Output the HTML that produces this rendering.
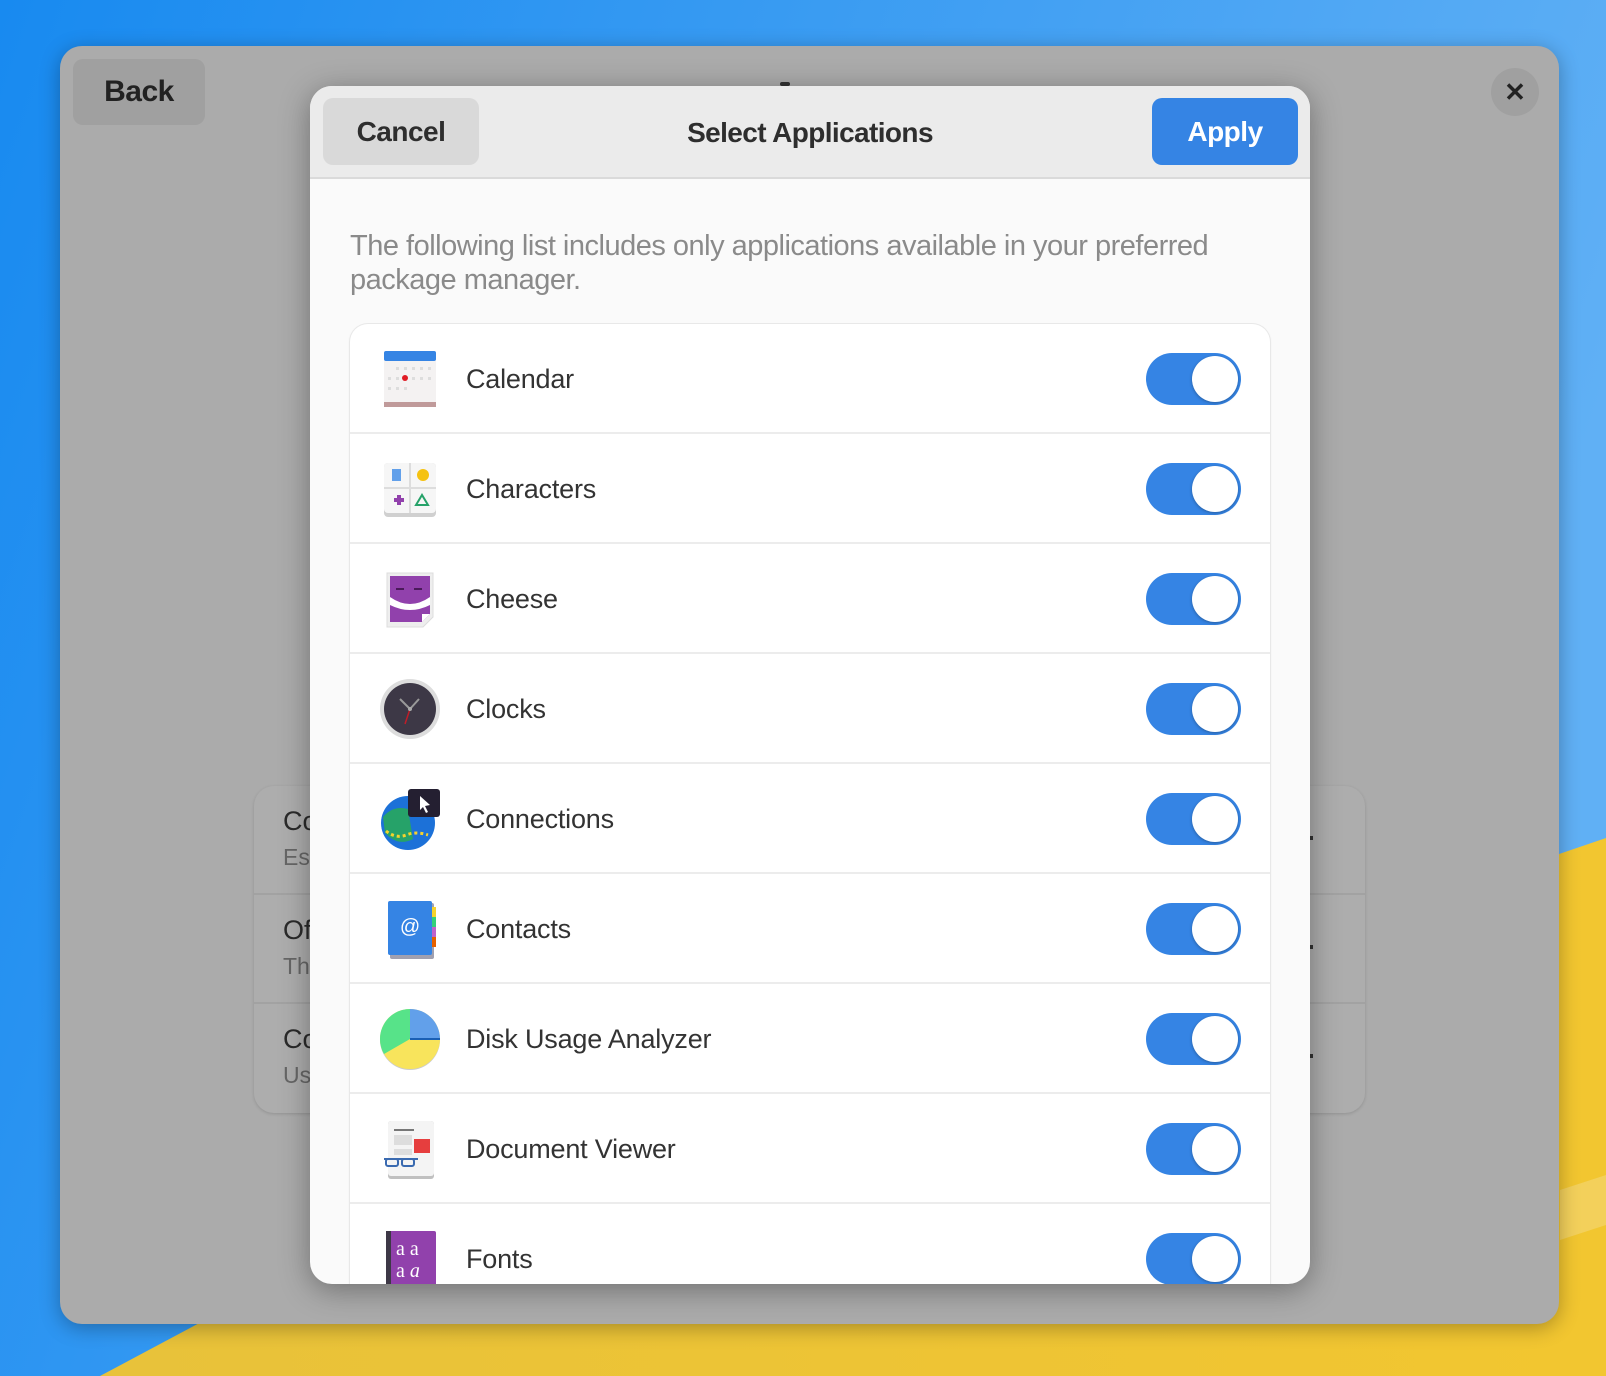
<!DOCTYPE html>
<html><head><meta charset="utf-8"><style>
*{box-sizing:border-box;margin:0;padding:0}
body{width:1606px;height:1376px;position:relative;overflow:hidden;font-family:"Liberation Sans",sans-serif;color:#2e2e2e}
.abs{position:absolute}
.win{left:60px;top:46px;width:1499px;height:1278px;border-radius:22px;background:#ababab;box-shadow:0 4px 20px rgba(0,0,0,.3)}
.btn{position:absolute;border-radius:10px;font-weight:bold;display:flex;align-items:center;justify-content:center;letter-spacing:-0.5px}
.dlg{left:310px;top:86px;width:1000px;height:1198px;border-radius:22px;background:#fafafa;overflow:hidden;box-shadow:0 6px 30px rgba(0,0,0,.35)}
.hdr{position:absolute;left:0;top:0;width:1000px;height:93px;background:#ebebeb;border-bottom:2px solid #dadada}
.list{position:absolute;left:40px;top:238px;width:920px;height:1100px;background:#fff;border-radius:18px;box-shadow:0 0 0 1px #e8e8e8,0 1px 3px rgba(0,0,0,.08)}
.row{position:absolute;left:0;width:920px;height:110px;border-bottom:2px solid #ececec}
.row .lbl{position:absolute;left:116px;top:0;line-height:110px;font-size:27px;color:#333;letter-spacing:-0.2px}
.row svg.ic{position:absolute;left:28px;top:23px;width:64px;height:64px}
.tg{position:absolute;left:796px;top:29px;width:95px;height:52px;border-radius:26px;background:#3584e4}
.tg::after{content:"";position:absolute;right:3px;top:3px;width:46px;height:46px;border-radius:50%;background:#fff;box-shadow:0 1px 3px rgba(0,0,0,.3)}
.bgl{left:254px;top:786px;width:1111px;height:327px;border-radius:20px;background:#adadad;box-shadow:0 1px 3px rgba(0,0,0,.15)}
.bgr{position:absolute;left:0;width:1111px;height:109px;border-bottom:2px solid #a2a2a2}
.bgr .t{position:absolute;left:29px;top:20px;font-size:27px;color:#2a2a2a}
.bgr .s{position:absolute;left:29px;top:58px;font-size:23px;color:#666}
.bgr .d{position:absolute;left:1055px;top:50px;width:4px;height:4px;background:#333}
</style></head><body>
<svg class="abs" style="left:0;top:0" width="1606" height="1376">
<defs><linearGradient id="b" x1="0" x2="1" y1="0" y2="0.3"><stop offset="0" stop-color="#188af0"/><stop offset="1" stop-color="#60b0f5"/></linearGradient>
<linearGradient id="y" x1="0" x2="1"><stop offset="0" stop-color="#e8c23a"/><stop offset="1" stop-color="#f2c630"/></linearGradient></defs>
<rect width="1606" height="1376" fill="url(#b)"/>
<polygon points="100,1376 220,1312 1606,838 1606,1376" fill="url(#y)"/>
<polygon points="1560,1190 1606,1175 1606,1225 1560,1240" fill="#f3d778" opacity=".6"/>
</svg>
<div class="abs win">
  <div class="btn" style="left:13px;top:13px;width:132px;height:66px;background:#a0a0a0;font-size:30px;color:#222">Back</div>
  <div class="abs" style="left:1431px;top:22px;width:48px;height:48px;border-radius:50%;background:#a0a0a0;display:flex;align-items:center;justify-content:center;font-size:26px;font-weight:bold;color:#222">✕</div>
  <div class="abs" style="left:720px;top:36px;width:10px;height:4px;background:#333;border-radius:2px"></div>
</div>
<div class="abs bgl">
  <div class="bgr" style="top:0"><div class="t">Co</div><div class="s">Es</div><div class="d"></div></div>
  <div class="bgr" style="top:109px"><div class="t">Of</div><div class="s">Th</div><div class="d"></div></div>
  <div class="bgr" style="top:218px;border:none"><div class="t">Co</div><div class="s">Us</div><div class="d"></div></div>
</div>
<div class="abs dlg">
  <div class="hdr">
    <div class="btn" style="left:13px;top:12px;width:156px;height:67px;background:#d9d9d9;font-size:28px;color:#2e2e2e">Cancel</div>
    <div class="abs" style="left:0;width:1000px;top:0;line-height:93px;text-align:center;font-size:28px;font-weight:bold;letter-spacing:-0.6px;color:#2e2e2e">Select Applications</div>
    <div class="btn" style="left:842px;top:12px;width:146px;height:67px;background:#3584e4;font-size:28px;color:#fff">Apply</div>
  </div>
  <div class="abs" style="left:40px;top:143px;width:960px;font-size:29px;line-height:34px;color:#8a8a8a;letter-spacing:-0.5px;white-space:nowrap">The following list includes only applications available in your preferred<br>package manager.</div>
  <div class="list">
    <div class="row" style="top:0">
      <svg class="ic" viewBox="0 0 64 64"><rect x="6" y="4" width="52" height="56" rx="3" fill="#f4f2f2"/><rect x="6" y="55" width="52" height="5" fill="#c09a9a"/><rect x="6" y="4" width="52" height="10" rx="2" fill="#3584e4"/><g fill="#ddd"><rect x="18" y="20" width="3" height="3"/><rect x="26" y="20" width="3" height="3"/><rect x="34" y="20" width="3" height="3"/><rect x="42" y="20" width="3" height="3"/><rect x="50" y="20" width="3" height="3"/><rect x="10" y="30" width="3" height="3"/><rect x="18" y="30" width="3" height="3"/><rect x="34" y="30" width="3" height="3"/><rect x="42" y="30" width="3" height="3"/><rect x="50" y="30" width="3" height="3"/><rect x="10" y="40" width="3" height="3"/><rect x="18" y="40" width="3" height="3"/><rect x="26" y="40" width="3" height="3"/></g><circle cx="27" cy="31" r="3" fill="#e01b24"/></svg>
      <div class="lbl">Calendar</div><div class="tg"></div></div>
    <div class="row" style="top:110px">
      <svg class="ic" viewBox="0 0 64 64"><rect x="6" y="6" width="52" height="54" rx="4" fill="#d0d0d0"/><rect x="6" y="6" width="52" height="50" rx="4" fill="#f6f6f6"/><line x1="32" y1="6" x2="32" y2="56" stroke="#ddd" stroke-width="2"/><line x1="6" y1="31" x2="58" y2="31" stroke="#ddd" stroke-width="2"/><rect x="14" y="12" width="9" height="12" fill="#62a0ea"/><circle cx="45" cy="18" r="6" fill="#f5c211"/><path d="M16 43h10M21 38v10" stroke="#9141ac" stroke-width="4"/><path d="M38 48l6-10 6 10z" fill="none" stroke="#26a269" stroke-width="2"/></svg>
      <div class="lbl">Characters</div><div class="tg"></div></div>
    <div class="row" style="top:220px">
      <svg class="ic" viewBox="0 0 64 64"><path d="M9 6h46v44l-10 10H9z" fill="#eee" stroke="#ddd"/><path d="M12 9h40v38l-8 8H12z" fill="#9141ac"/><path d="M12 30q20 14 40 0v8q-20 10-40 0z" fill="#fff"/><path d="M44 55v-8h8" fill="#fff"/><path d="M18 22h8M36 22h8" stroke="#4a1a5a" stroke-width="2"/></svg>
      <div class="lbl">Cheese</div><div class="tg"></div></div>
    <div class="row" style="top:330px">
      <svg class="ic" viewBox="0 0 64 64"><circle cx="32" cy="32" r="30" fill="#ddd"/><circle cx="32" cy="32" r="26" fill="#3d3846"/><path d="M32 32L22 22M32 32L41 22" stroke="#999" stroke-width="2"/><path d="M32 32L27 47" stroke="#c01c28" stroke-width="1.5"/><circle cx="32" cy="32" r="2" fill="#aaa"/></svg>
      <div class="lbl">Clocks</div><div class="tg"></div></div>
    <div class="row" style="top:440px">
      <svg class="ic" viewBox="0 0 64 64"><circle cx="30" cy="36" r="27" fill="#1c71d8"/><path d="M5 30q10-12 25-8l5 30q-15 8-28-6z" fill="#26a269"/><path d="M8 44q10 8 20 4t22 0" fill="none" stroke="#f6d32d" stroke-width="3" stroke-dasharray="3 3"/><rect x="30" y="2" width="32" height="28" rx="3" fill="#241f31"/><path d="M42 9l10 9-5 1 3 6-2 1-3-6-3 3z" fill="#fff"/></svg>
      <div class="lbl">Connections</div><div class="tg"></div></div>
    <div class="row" style="top:550px">
      <svg class="ic" viewBox="0 0 64 64"><rect x="12" y="6" width="44" height="56" rx="2" fill="#a0a0b0"/><rect x="10" y="4" width="44" height="54" rx="2" fill="#3584e4"/><rect x="54" y="10" width="4" height="10" fill="#f6d32d"/><rect x="54" y="20" width="4" height="10" fill="#33d17a"/><rect x="54" y="30" width="4" height="10" fill="#c061cb"/><rect x="54" y="40" width="4" height="10" fill="#e66100"/><text x="32" y="36" font-family="Liberation Sans" font-size="20" fill="#fff" text-anchor="middle">@</text></svg>
      <div class="lbl">Contacts</div><div class="tg"></div></div>
    <div class="row" style="top:660px">
      <svg class="ic" viewBox="0 0 64 64"><circle cx="32" cy="33" r="30" fill="#ccc"/><circle cx="32" cy="32" r="30" fill="#f8e45c"/><path d="M32 32V2A30 30 0 0 1 62 31z" fill="#62a0ea"/><path d="M32 32L6 47A30 30 0 0 1 32 2z" fill="#57e389"/><path d="M32 32H62" stroke="#1a5fb4" stroke-width="2"/></svg>
      <div class="lbl">Disk Usage Analyzer</div><div class="tg"></div></div>
    <div class="row" style="top:770px">
      <svg class="ic" viewBox="0 0 64 64"><rect x="10" y="4" width="46" height="58" rx="3" fill="#c0c0c0"/><rect x="10" y="4" width="46" height="55" rx="3" fill="#f4f4f4"/><rect x="16" y="12" width="20" height="2" fill="#777"/><rect x="16" y="18" width="18" height="10" fill="#ddd"/><rect x="36" y="22" width="16" height="14" fill="#e63e3e"/><rect x="16" y="32" width="18" height="6" fill="#ddd"/><path d="M6 42h34" stroke="#3a6ab0" stroke-width="2"/><rect x="8" y="42" width="12" height="7" rx="2" fill="none" stroke="#3a6ab0" stroke-width="2"/><rect x="24" y="42" width="12" height="7" rx="2" fill="none" stroke="#3a6ab0" stroke-width="2"/></svg>
      <div class="lbl">Document Viewer</div><div class="tg"></div></div>
    <div class="row" style="top:880px;border:none">
      <svg class="ic" viewBox="0 0 64 64"><rect x="8" y="4" width="50" height="58" rx="2" fill="#9141ac"/><rect x="8" y="4" width="5" height="58" fill="#3d3846"/><text x="18" y="28" font-family="Liberation Serif" font-size="20" fill="#fff">a a</text><text x="18" y="50" font-family="Liberation Serif" font-size="20" fill="#fff">a <tspan font-style="italic">a</tspan></text></svg>
      <div class="lbl">Fonts</div><div class="tg"></div></div>
  </div>
</div>
</body></html>
